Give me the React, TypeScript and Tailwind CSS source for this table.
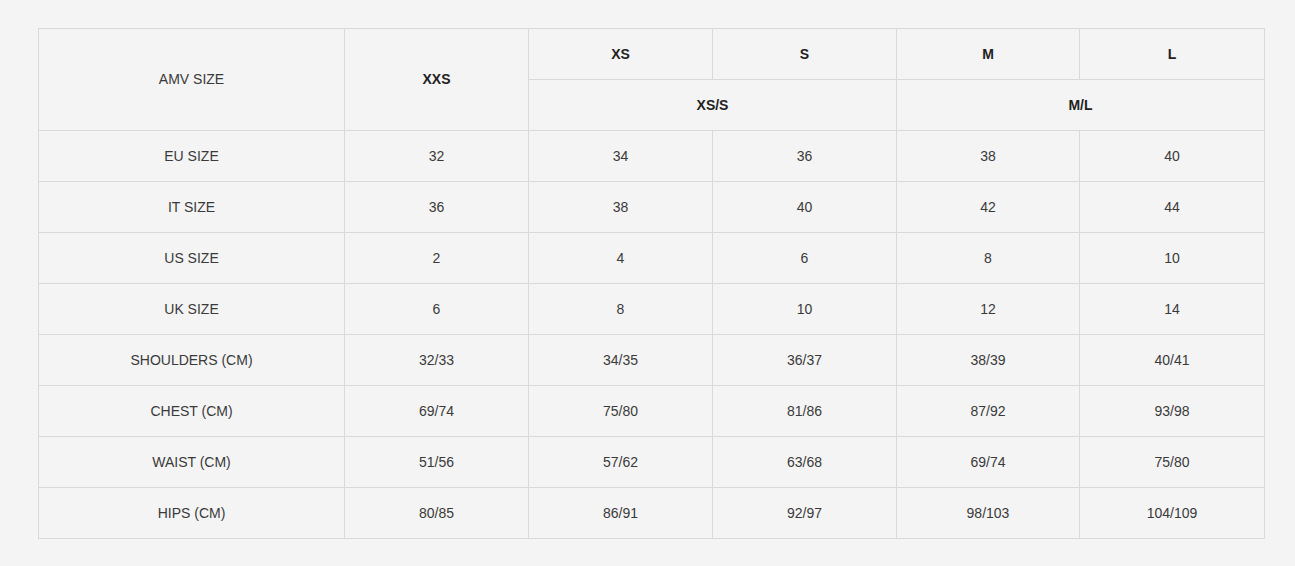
import React from "react";

const rows: [string, string[]][] = [
  ["EU SIZE", ["32", "34", "36", "38", "40"]],
  ["IT SIZE", ["36", "38", "40", "42", "44"]],
  ["US SIZE", ["2", "4", "6", "8", "10"]],
  ["UK SIZE", ["6", "8", "10", "12", "14"]],
  ["SHOULDERS (CM)", ["32/33", "34/35", "36/37", "38/39", "40/41"]],
  ["CHEST (CM)", ["69/74", "75/80", "81/86", "87/92", "93/98"]],
  ["WAIST (CM)", ["51/56", "57/62", "63/68", "69/74", "75/80"]],
  ["HIPS (CM)", ["80/85", "86/91", "92/97", "98/103", "104/109"]],
];

const cell = "border border-[#d9d9d9] text-center align-middle h-[51px] p-0";

export default function App() {
  return (
    <div className="min-h-[566px] w-full bg-[#f4f4f4] pt-[28px] pl-[38px] text-[14px] text-[#3a3a3a] font-['Liberation_Sans',Arial,sans-serif]">
      <table className="border-collapse table-fixed w-[1226px]">
        <colgroup>
          <col className="w-[306px]" />
          <col className="w-[184px]" />
          <col className="w-[184px]" />
          <col className="w-[184px]" />
          <col className="w-[183px]" />
          <col className="w-[185px]" />
        </colgroup>
        <tbody>
          <tr>
            <td rowSpan={2} className={cell}>AMV SIZE</td>
            <td rowSpan={2} className={`${cell} font-bold text-[#222]`}>XXS</td>
            <td className={`${cell} font-bold text-[#222]`}>XS</td>
            <td className={`${cell} font-bold text-[#222]`}>S</td>
            <td className={`${cell} font-bold text-[#222]`}>M</td>
            <td className={`${cell} font-bold text-[#222]`}>L</td>
          </tr>
          <tr>
            <td colSpan={2} className={`${cell} font-bold text-[#222]`}>XS/S</td>
            <td colSpan={2} className={`${cell} font-bold text-[#222]`}>M/L</td>
          </tr>
          {rows.map(([label, vals]) => (
            <tr key={label}>
              <td className={cell}>{label}</td>
              {vals.map((v, i) => (
                <td key={i} className={cell}>{v}</td>
              ))}
            </tr>
          ))}
        </tbody>
      </table>
    </div>
  );
}
